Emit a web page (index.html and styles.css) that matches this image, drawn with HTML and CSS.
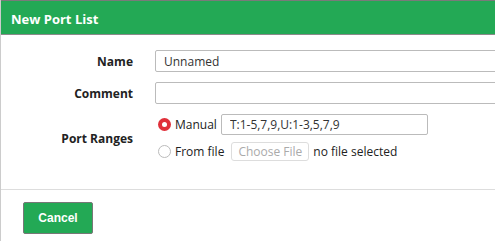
FILE: index.html
```html
<!DOCTYPE html>
<html lang="en">
<head>
  <meta charset="UTF-8">
  <title>New Port List</title>
  <link rel="stylesheet" href="styles.css">
</head>
<body>
  <div class="dialog">
    <div class="dialog-title">New Port List</div>
    <div class="dialog-body">
      <div class="row">
        <label class="label">Name</label>
        <input class="text wide" type="text" value="Unnamed">
      </div>
      <div class="row">
        <label class="label">Comment</label>
        <input class="text wide" type="text" value="">
      </div>
      <div class="row">
        <label class="label">Port Ranges</label>
        <div class="choices">
          <div class="choice">
            <span class="radio checked"></span>
            <span>Manual</span>
            <input class="text ports" type="text" value="T:1-5,7,9,U:1-3,5,7,9">
          </div>
          <div class="choice">
            <span class="radio"></span>
            <span>From file</span>
            <span class="file-btn">Choose File</span>
            <span class="file-name">no file selected</span>
          </div>
        </div>
      </div>
    </div>
    <div class="dialog-footer">
      <button class="btn">Cancel</button>
    </div>
  </div>
</body>
</html>
```

FILE: styles.css
```css
*{margin:0;padding:0;box-sizing:border-box}
html,body{overflow:hidden}
body{font-family:'Open Sans',sans-serif;font-size:12px;color:#222;background:#fff}
.dialog{width:100%;height:241px;border-left:1px solid #ccc;overflow:hidden}
.dialog-title{height:35px;background:#23a955;color:#fff;font-weight:700;font-size:13px;padding:9px 10px 0;border-top:1px solid #7a7a7a;border-bottom:1px solid #8a8a8a}
.dialog-body{padding:15px 0 27px;border-bottom:1px solid #ddd}
.row{display:flex;align-items:center;margin-bottom:10px}
.row:last-child{margin-bottom:0}
.label{width:132px;flex-shrink:0;text-align:right;font-weight:700;margin-right:22px}
.text{font-family:inherit;font-size:12px;color:#333;height:22px;border:1px solid #bbb;border-radius:2px;padding:0 8px;outline:none;flex-shrink:0}
.wide{width:360px}
.ports{width:207px;height:21px;margin-left:4px}
.choices{display:flex;flex-direction:column;gap:6px;flex-shrink:0}
.choice{display:flex;align-items:center;height:21px}
.radio{width:13px;height:13px;border-radius:50%;border:1px solid #bbb;background:#fff;margin:0 4px 0 3px}
.radio.checked{border:none;background:#e0303a;display:flex;align-items:center;justify-content:center}
.radio.checked::after{content:'';width:5px;height:5px;border-radius:50%;background:#fff}
.file-btn{margin-left:7px;border:1px solid #ddd;border-radius:3px;color:#aaa;font-size:12px;padding:0 6px;height:19px;display:flex;align-items:center}
.file-name{margin-left:4px;font-size:12px}
.dialog-footer{padding:12px 0 0 22px}
.btn{width:70px;height:32px;background:#23a955;color:#fff;font-family:'Liberation Sans',Arial,sans-serif;font-weight:700;font-size:12px;border:1px solid #777;border-radius:2px}
```
